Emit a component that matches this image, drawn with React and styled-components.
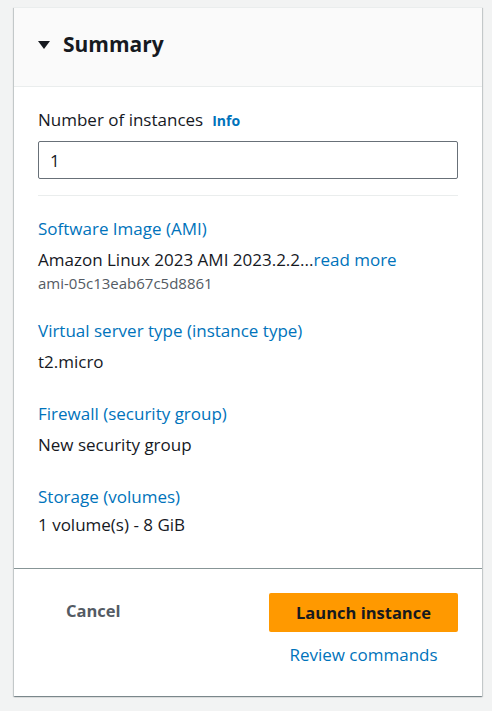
import React from 'react';
import styled, { createGlobalStyle } from 'styled-components';

const GlobalStyle = createGlobalStyle`
  html, body {
    margin: 0;
    padding: 0;
    background: #f2f3f3;
    font-family: "Open Sans", "Noto Sans", Arial, sans-serif;
    color: #16191f;
  }
`;

const Page = styled.div`
  padding: 7px 10px 16px 14px;
`;

const Card = styled.section`
  background: #fff;
  box-shadow: 0 1px 1px 0 rgba(0, 28, 36, 0.3), 1px 1px 1px 0 rgba(0, 28, 36, 0.15), -1px 1px 1px 0 rgba(0, 28, 36, 0.15);
  border-top: 1px solid #eaeded;
`;

const Header = styled.header`
  box-sizing: border-box;
  display: flex;
  align-items: center;
  gap: 13px;
  height: 79px;
  padding: 0 24px 6px;
  background: #fafafa;
  border-bottom: 1px solid #eaeded;
`;

const Caret = styled.span`
  width: 0;
  height: 0;
  border-left: 6px solid transparent;
  border-right: 6px solid transparent;
  border-top: 8px solid #16191f;
  margin-top: 2px;
`;

const Title = styled.h2`
  margin: 0;
  font-size: 21px;
  font-weight: 700;
`;

const Body = styled.div`
  padding: 21px 24px 31px 24px;
  border-bottom: 1px solid #879596;
`;

const Label = styled.div`
  display: flex;
  align-items: baseline;
  gap: 9px;
  font-size: 17px;
  line-height: 24px;
`;

const InfoLink = styled.a`
  font-size: 14px;
  font-weight: 700;
  color: #0073bb;
  text-decoration: none;
`;

const Input = styled.input`
  box-sizing: border-box;
  display: block;
  width: 100%;
  height: 38px;
  margin-top: 8px;
  padding: 0 11px;
  border: 1px solid #687078;
  border-radius: 2px;
  font: inherit;
  font-size: 17px;
  color: #16191f;
  background: #fff;
`;

const Divider = styled.hr`
  margin: 16px 0 21px;
  border: 0;
  border-top: 1px solid #eaeded;
`;

const Section = styled.div`
  display: flex;
  flex-direction: column;
  margin-bottom: ${p => p.$gap}px;
`;

const SectionTitle = styled.a`
  font-size: 17px;
  line-height: 24px;
  color: #0073bb;
  text-decoration: none;
  margin-bottom: ${p => p.$tight ? 4 : 7}px;
`;

const Value = styled.div`
  font-size: 17px;
  line-height: 24px;
`;

const InlineLink = styled.a`
  color: #0073bb;
  text-decoration: none;
`;

const SubValue = styled.div`
  font-size: 15px;
  line-height: 22px;
  color: #545b64;
`;

const Footer = styled.footer`
  display: flex;
  justify-content: space-between;
  padding: 24px 24px 30px 52px;
`;

const CancelButton = styled.button`
  align-self: flex-start;
  background: none;
  border: 0;
  padding: 0;
  margin-top: 6px;
  font: inherit;
  font-size: 16.5px;
  font-weight: 700;
  color: #545b64;
`;

const Actions = styled.div`
  display: flex;
  flex-direction: column;
  align-items: center;
  width: 189px;
  gap: 12px;
`;

const PrimaryButton = styled.button`
  width: 100%;
  height: 39px;
  border: 0;
  border-radius: 2px;
  background: #ff9900;
  font: inherit;
  font-size: 16.5px;
  font-weight: 700;
  color: #16191f;
`;

const ReviewLink = styled.a`
  font-size: 17px;
  line-height: 22px;
  color: #0073bb;
  text-decoration: none;
`;

const items = [
  { title: 'Virtual server type (instance type)', value: 't2.micro' },
  { title: 'Firewall (security group)', value: 'New security group' },
  { title: 'Storage (volumes)', value: '1 volume(s) - 8 GiB', last: true },
];

export default function App() {
  return (
    <>
      <GlobalStyle />
      <Page>
        <Card>
          <Header>
            <Caret />
            <Title>Summary</Title>
          </Header>
          <Body>
            <Label>
              Number of instances <InfoLink href="#">Info</InfoLink>
            </Label>
            <Input defaultValue="1" />
            <Divider />
            <Section $gap={25}>
              <SectionTitle href="#">Software Image (AMI)</SectionTitle>
              <Value>
                Amazon Linux 2023 AMI 2023.2.2...<InlineLink href="#">read more</InlineLink>
              </Value>
              <SubValue>ami-05c13eab67c5d8861</SubValue>
            </Section>
            {items.map(item => (
              <Section key={item.title} $gap={item.last ? 0 : 28}>
                <SectionTitle href="#" $tight={item.last}>{item.title}</SectionTitle>
                <Value>{item.value}</Value>
              </Section>
            ))}
          </Body>
          <Footer>
            <CancelButton>Cancel</CancelButton>
            <Actions>
              <PrimaryButton>Launch instance</PrimaryButton>
              <ReviewLink href="#">Review commands</ReviewLink>
            </Actions>
          </Footer>
        </Card>
      </Page>
    </>
  );
}
